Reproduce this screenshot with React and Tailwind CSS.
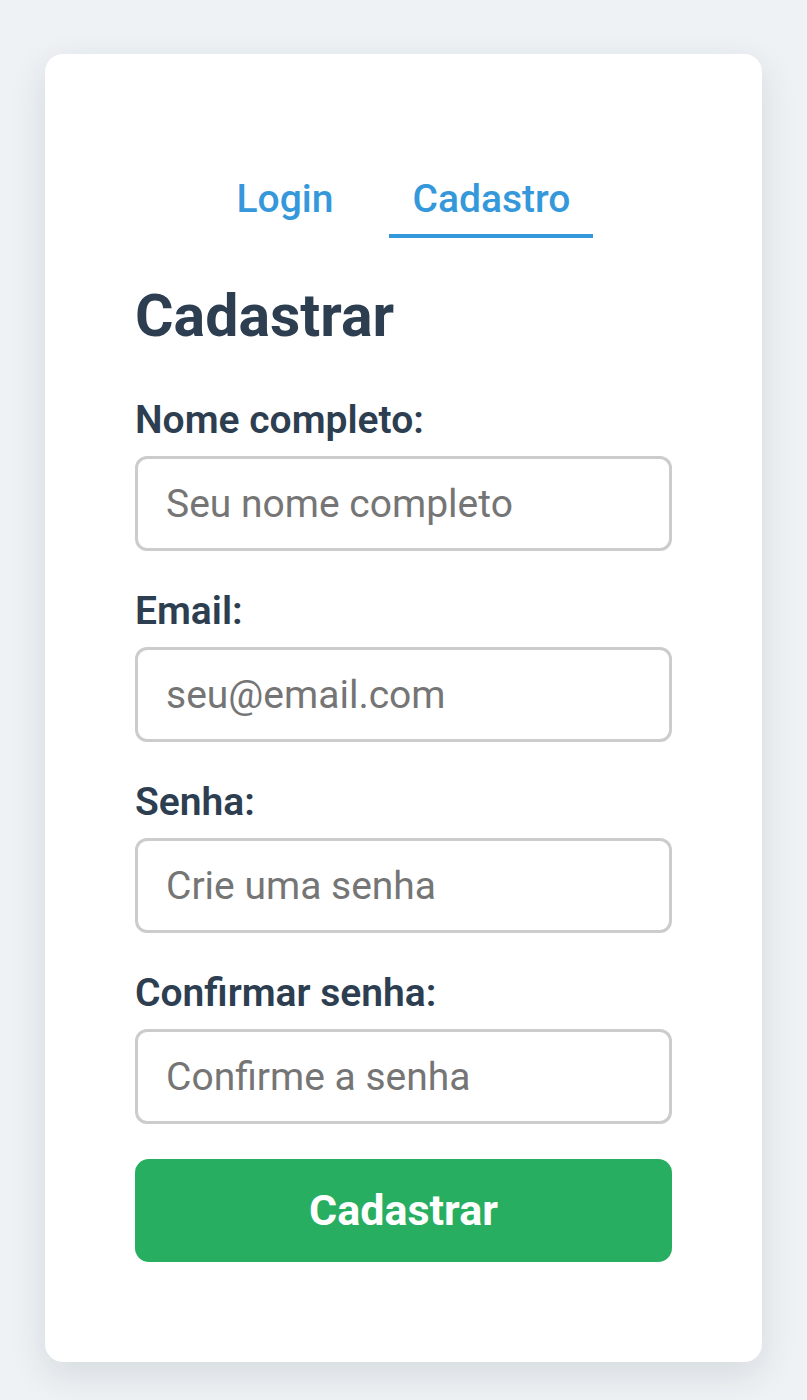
import React, { useState } from 'react';

const fields = [
  { id: 'nome', label: 'Nome completo:', type: 'text', placeholder: 'Seu nome completo' },
  { id: 'email', label: 'Email:', type: 'email', placeholder: 'seu@email.com' },
  { id: 'senha', label: 'Senha:', type: 'password', placeholder: 'Crie uma senha' },
  { id: 'confirmar', label: 'Confirmar senha:', type: 'password', placeholder: 'Confirme a senha' },
];

const App = () => {
  const [tab, setTab] = useState('cadastro');

  return (
    <div
      className="min-h-screen bg-[#eef2f5] pt-[54px] pb-[37px]"
      style={{ fontFamily: 'Roboto, "Noto Sans", sans-serif' }}
    >
      <div className="mx-auto w-[717px] rounded-[18px] bg-white px-[90px] pt-[110px] pb-[100px] shadow-[0_12px_36px_rgba(30,45,60,0.12)]">
        {/* Tabs */}
        <div className="flex justify-center gap-[33px]">
          {[
            { key: 'login', label: 'Login' },
            { key: 'cadastro', label: 'Cadastro' },
          ].map((t) => (
            <button
              key={t.key}
              type="button"
              onClick={() => setTab(t.key)}
              className={`px-[23px] pt-[12px] pb-[11px] text-[39px] leading-[47px] font-medium text-[#3498db] border-b-4 ${
                tab === t.key ? 'border-[#3498db]' : 'border-transparent'
              }`}
            >
              {t.label}
            </button>
          ))}
        </div>

        <h2 className="mt-[42px] text-[59px] leading-[72px] font-bold text-[#2c3e50]">Cadastrar</h2>

        <form className="mt-[45px] flex flex-col" onSubmit={(e) => e.preventDefault()}>
          {fields.map((f) => (
            <div key={f.id} className="mb-[37px] flex flex-col last-of-type:mb-[35px]">
              <label htmlFor={f.id} className="mb-[12px] text-[39px] leading-[47px] font-semibold text-[#2c3e50]">
                {f.label}
              </label>
              <input
                id={f.id}
                type={f.type}
                placeholder={f.placeholder}
                className="h-[95px] w-full rounded-[12px] border-[3px] border-[#cccccc] px-[28px] text-[39px] text-[#333] placeholder-[#757575] outline-none"
              />
            </div>
          ))}
          <button
            type="submit"
            className="h-[103px] w-full rounded-[14px] bg-[#27ae60] text-[43px] font-bold text-white"
          >
            Cadastrar
          </button>
        </form>
      </div>
    </div>
  );
};

export default App;
